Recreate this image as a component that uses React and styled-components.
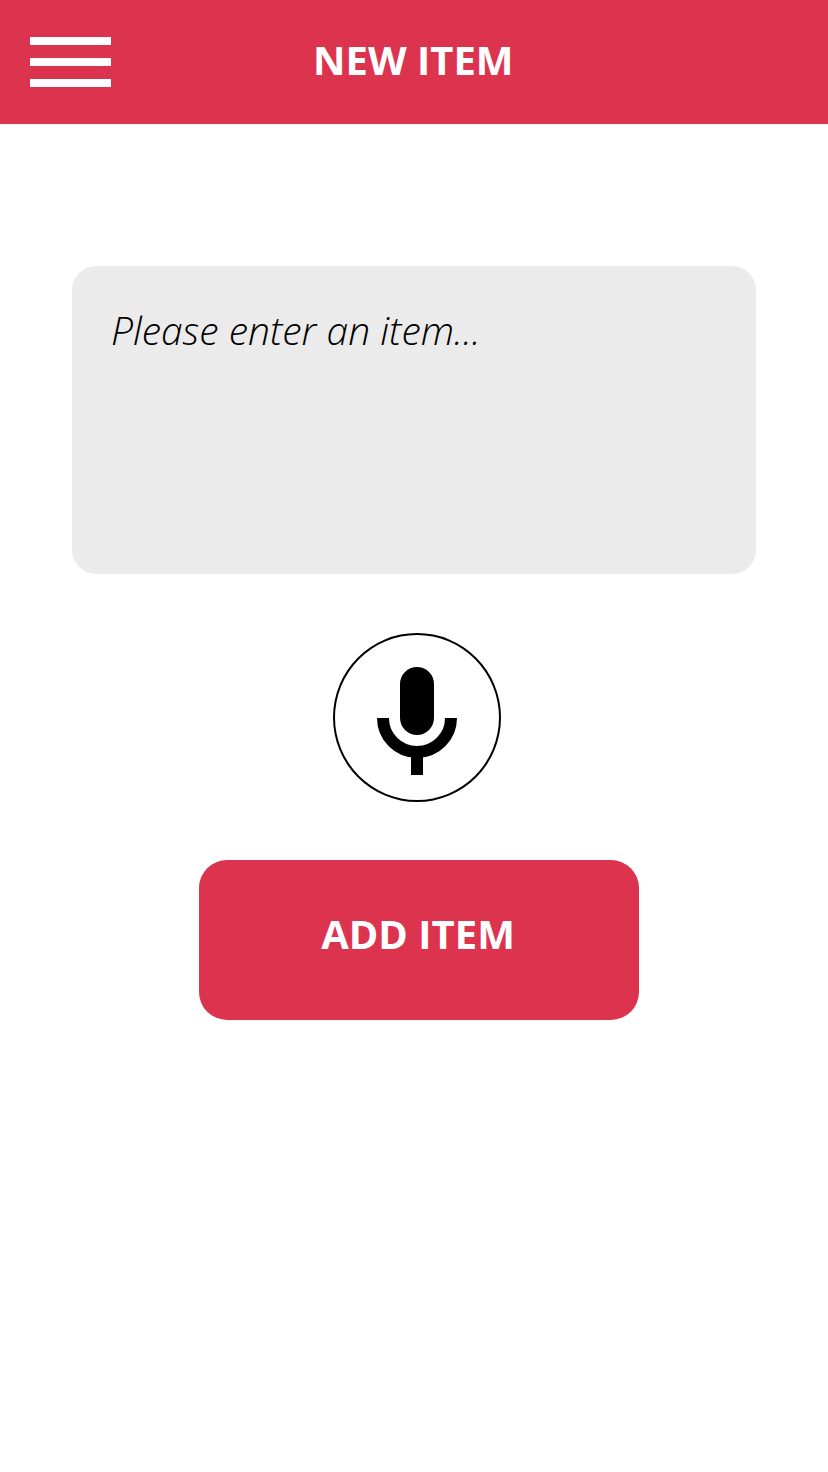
import React from "react";
import styled, { createGlobalStyle } from "styled-components";

const GlobalStyle = createGlobalStyle`
  html, body {
    margin: 0;
    padding: 0;
    background: #ffffff;
    font-family: "Open Sans", "Liberation Sans", sans-serif;
  }
`;

const Page = styled.div`
  width: 828px;
  height: 1472px;
  overflow: hidden;
  display: flex;
  flex-direction: column;
`;

const Header = styled.header`
  height: 124px;
  background-color: #dc344f;
  display: flex;
  align-items: center;
  padding-left: 30px;
`;

const MenuButton = styled.button`
  all: unset;
  width: 81px;
  height: 50px;
  display: flex;
  flex-direction: column;
  justify-content: space-between;
  cursor: pointer;
`;

const MenuBar = styled.span`
  display: block;
  height: 8px;
  background-color: #ffffff;
`;

const Title = styled.h1`
  margin: 0 0 4px 202px;
  font-size: 40px;
  line-height: 120px;
  font-weight: 700;
  color: #ffffff;
  white-space: nowrap;
`;

const Content = styled.main`
  display: flex;
  flex-direction: column;
  padding-top: 142px;
`;

const ItemInput = styled.textarea`
  all: unset;
  box-sizing: border-box;
  display: block;
  width: 684px;
  height: 308px;
  margin-left: 72px;
  padding: 37px 39px;
  border-radius: 24px;
  background-color: #ebebeb;
  font-family: "Open Sans", "Liberation Sans", sans-serif;
  font-size: 39px;
  line-height: 54px;
  font-style: italic;
  font-weight: 300;
  color: #000000;
  &::placeholder {
    color: #000000;
    opacity: 1;
  }
`;

const MicButton = styled.button`
  all: unset;
  box-sizing: border-box;
  width: 168px;
  height: 169px;
  margin: 59px 0 0 333px;
  padding-top: 6px;
  border: 2px solid #000000;
  border-radius: 50%;
  display: flex;
  align-items: center;
  justify-content: center;
  cursor: pointer;
`;

const AddButton = styled.button`
  all: unset;
  box-sizing: border-box;
  width: 440px;
  height: 160px;
  margin: 58px 0 0 199px;
  padding: 0 2px 14px 0;
  border-radius: 28px;
  background-color: #dc344f;
  color: #ffffff;
  font-size: 40px;
  font-weight: 700;
  display: flex;
  align-items: center;
  justify-content: center;
  cursor: pointer;
`;

const MicIcon = () => (
  <svg width="80" height="108" viewBox="0 0 80 108" fill="none">
    <rect x="23" y="0" width="34" height="68" rx="17" fill="#000" />
    <path d="M6 51a34 34 0 0 0 68 0" stroke="#000" strokeWidth="12" />
    <rect x="34" y="84" width="12" height="24" fill="#000" />
  </svg>
);

const App = () => {
  return (
    <Page>
      <GlobalStyle />
      <Header>
        <MenuButton aria-label="Menu">
          <MenuBar />
          <MenuBar />
          <MenuBar />
        </MenuButton>
        <Title>NEW ITEM</Title>
      </Header>
      <Content>
        <ItemInput placeholder="Please enter an item..." />
        <MicButton aria-label="Record">
          <MicIcon />
        </MicButton>
        <AddButton>ADD ITEM</AddButton>
      </Content>
    </Page>
  );
};

export default App;
